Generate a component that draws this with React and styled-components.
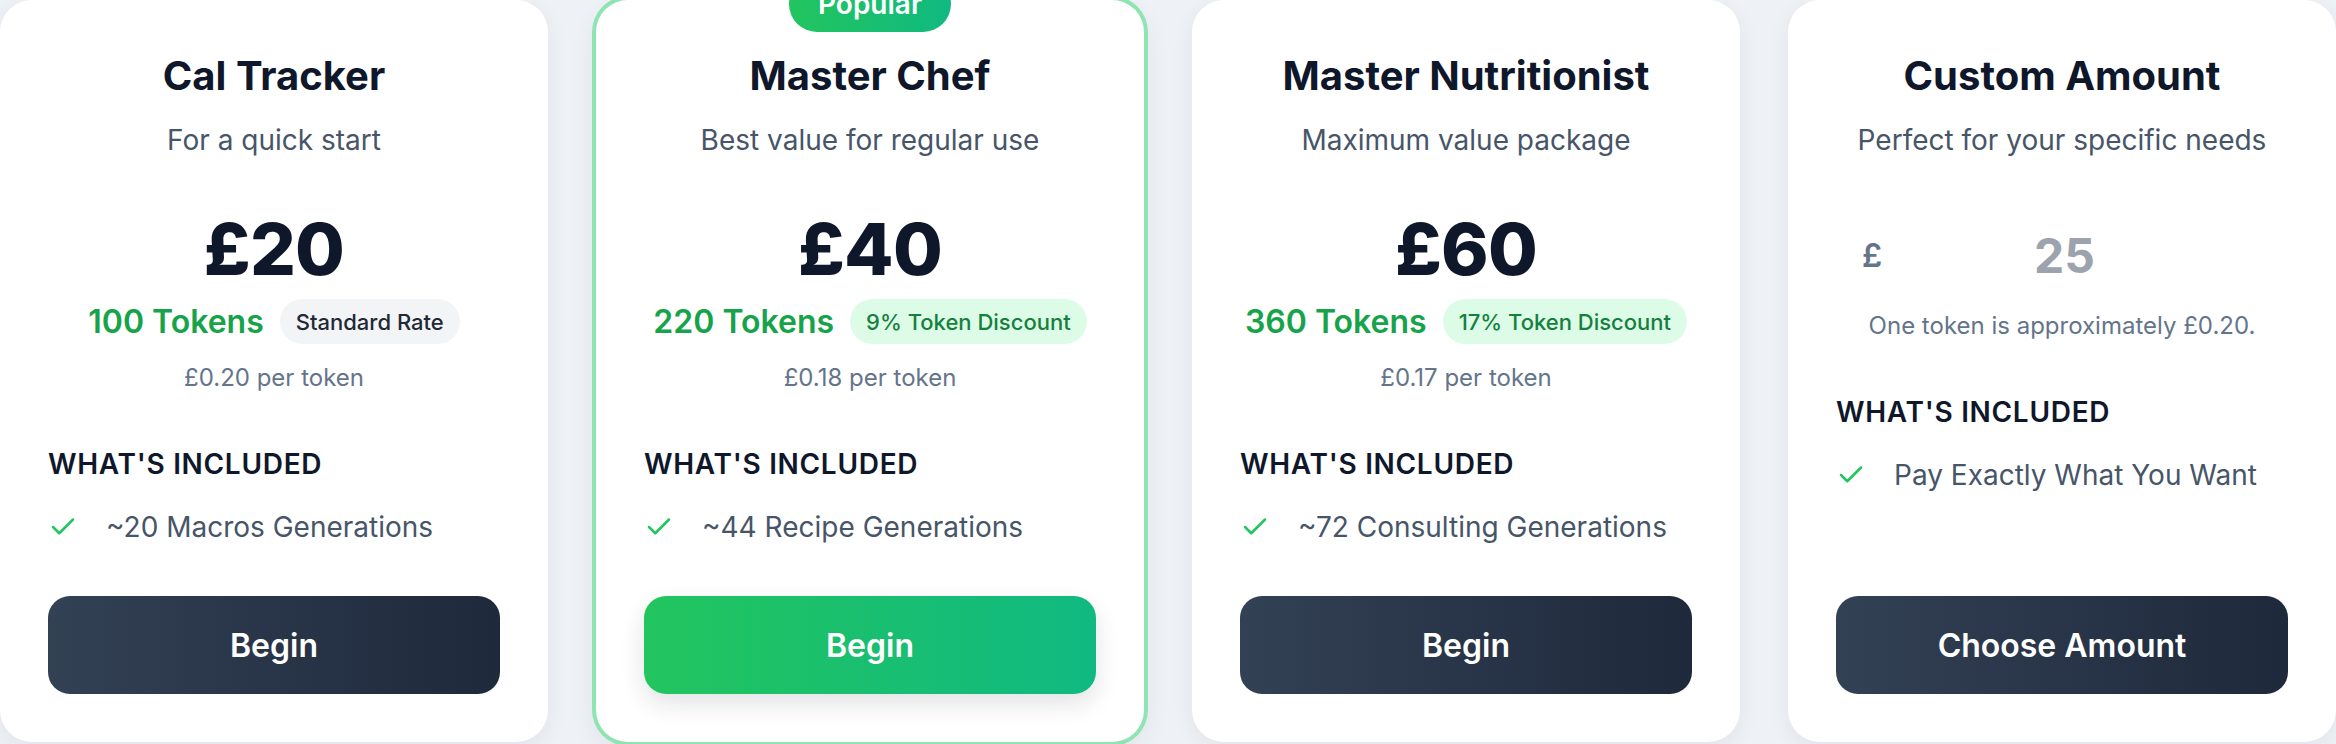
import React from 'react';
import styled, { createGlobalStyle, css } from 'styled-components';

const GlobalStyle = createGlobalStyle`
  html, body { margin: 0; padding: 0; background: #eef2f7; }
  body { font-family: Inter, "Noto Sans", sans-serif; overflow: hidden; }
  * { box-sizing: border-box; }
`;

const Row = styled.div`
  display: flex;
  gap: 48px;
  width: 2336px;
  height: 744px;
`;

const Card = styled.div`
  position: relative;
  flex: 0 0 548px;
  height: 742px;
  padding: 48px;
  background: #ffffff;
  border-radius: 32px;
  display: flex;
  flex-direction: column;
  box-shadow: ${(p) =>
    p.$featured
      ? '0 0 0 4px #8fe4b2, 0 10px 30px rgba(15, 23, 42, 0.07)'
      : '0 6px 24px rgba(15, 23, 42, 0.06)'};
`;

const PopularBadge = styled.div`
  position: absolute;
  top: -24px;
  left: 50%;
  transform: translateX(-50%);
  padding: 10px 29px;
  line-height: 36px;
  font-size: 28px;
  font-weight: 600;
  color: #ffffff;
  border-radius: 999px;
  background: linear-gradient(90deg, #22c55e, #10b981);
  white-space: nowrap;
`;

const Title = styled.h2`
  margin: 2px 0 0;
  font-size: 40px;
  line-height: 52px;
  font-weight: 700;
  color: #0f172a;
  text-align: center;
`;

const Subtitle = styled.p`
  margin: 22px 0 0;
  font-size: 28px;
  line-height: 32px;
  color: #475569;
  text-align: center;
`;

const Price = styled.div`
  margin-top: 53px;
  font-size: 72px;
  line-height: 80px;
  font-weight: 800;
  color: #0f172a;
  text-align: center;
  letter-spacing: -0.01em;
`;

const TokenRow = styled.div`
  margin-top: 10px;
  display: flex;
  justify-content: center;
  align-items: center;
  gap: 16px;
`;

const Tokens = styled.span`
  font-size: 32px;
  font-weight: 600;
  color: #16a34a;
`;

const RateBadge = styled.span`
  height: 45px;
  display: inline-flex;
  align-items: center;
  padding: 0 16px;
  border-radius: 999px;
  font-size: 22px;
  font-weight: 500;
  ${(p) =>
    p.$discount
      ? css`
          background: #dcfce7;
          color: #15803d;
        `
      : css`
          background: #f3f4f6;
          color: #1f2937;
        `}
`;

const PerToken = styled.p`
  margin: 18px 0 0;
  font-size: 24px;
  line-height: 32px;
  color: #64748b;
  text-align: center;
`;

const CustomInputWrap = styled.div`
  position: relative;
  margin-top: 63px;
  height: 72px;
`;

const Currency = styled.span`
  position: absolute;
  left: 26px;
  top: 50%;
  transform: translateY(-50%);
  font-size: 32px;
  font-weight: 600;
  color: #64748b;
`;

const AmountInput = styled.input`
  width: 100%;
  height: 100%;
  padding: 0 0 0 20px;
  border: none;
  outline: none;
  background: transparent;
  text-align: center;
  font-family: inherit;
  font-size: 48px;
  font-weight: 700;
  color: #0f172a;
  &::placeholder { color: #9ca3af; }
`;

const Note = styled.p`
  margin: 19px 0 0;
  font-size: 24px;
  line-height: 32px;
  color: #64748b;
  text-align: center;
`;

const Section = styled.div`
  margin-top: 52px;
`;

const SectionTitle = styled.h3`
  margin: 0;
  font-size: 28px;
  line-height: 36px;
  font-weight: 600;
  letter-spacing: 0.025em;
  text-transform: uppercase;
  color: #0f172a;
`;

const FeatureList = styled.ul`
  list-style: none;
  margin: 29px 0 0;
  padding: 0;
`;

const Feature = styled.li`
  display: flex;
  align-items: center;
  gap: 28px;
  font-size: 28px;
  line-height: 32px;
  color: #475569;
`;

const CheckIcon = styled.svg`
  flex: 0 0 30px;
  width: 30px;
  height: 30px;
`;

const Button = styled.button`
  margin-top: auto;
  width: 100%;
  height: 98px;
  border: none;
  border-radius: 22px;
  font-family: inherit;
  font-size: 32px;
  font-weight: 600;
  color: #ffffff;
  cursor: pointer;
  ${(p) =>
    p.$primary
      ? css`
          background: linear-gradient(90deg, #22c55e, #10b981);
          box-shadow: 0 10px 24px rgba(15, 23, 42, 0.12);
        `
      : css`
          background: linear-gradient(90deg, #334155, #1e293b);
        `}
`;

const Check = () => (
  <CheckIcon viewBox="0 0 24 24" fill="none" stroke="#22c55e" strokeWidth="2" strokeLinecap="round" strokeLinejoin="round">
    <path d="M20 6 9 17l-5-5" />
  </CheckIcon>
);

const plans = [
  { title: 'Cal Tracker', sub: 'For a quick start', price: '£20', tokens: '100 Tokens', badge: 'Standard Rate', per: '£0.20 per token', feature: '~20 Macros Generations' },
  { title: 'Master Chef', sub: 'Best value for regular use', price: '£40', tokens: '220 Tokens', badge: '9% Token Discount', discount: true, per: '£0.18 per token', feature: '~44 Recipe Generations', featured: true },
  { title: 'Master Nutritionist', sub: 'Maximum value package', price: '£60', tokens: '360 Tokens', badge: '17% Token Discount', discount: true, per: '£0.17 per token', feature: '~72 Consulting Generations' },
];

export default function App() {
  return (
    <>
      <GlobalStyle />
      <Row>
        {plans.map((p) => (
          <Card key={p.title} $featured={p.featured}>
            {p.featured && <PopularBadge>Popular</PopularBadge>}
            <Title>{p.title}</Title>
            <Subtitle>{p.sub}</Subtitle>
            <Price>{p.price}</Price>
            <TokenRow>
              <Tokens>{p.tokens}</Tokens>
              <RateBadge $discount={p.discount}>{p.badge}</RateBadge>
            </TokenRow>
            <PerToken>{p.per}</PerToken>
            <Section>
              <SectionTitle>What's Included</SectionTitle>
              <FeatureList>
                <Feature><Check />{p.feature}</Feature>
              </FeatureList>
            </Section>
            <Button $primary={p.featured}>Begin</Button>
          </Card>
        ))}
        <Card>
          <Title>Custom Amount</Title>
          <Subtitle>Perfect for your specific needs</Subtitle>
          <CustomInputWrap>
            <Currency>£</Currency>
            <AmountInput type="number" placeholder="25" />
          </CustomInputWrap>
          <Note>One token is approximately £0.20.</Note>
          <Section>
            <SectionTitle>What's Included</SectionTitle>
            <FeatureList>
              <Feature><Check />Pay Exactly What You Want</Feature>
            </FeatureList>
          </Section>
          <Button>Choose Amount</Button>
        </Card>
      </Row>
    </>
  );
}
